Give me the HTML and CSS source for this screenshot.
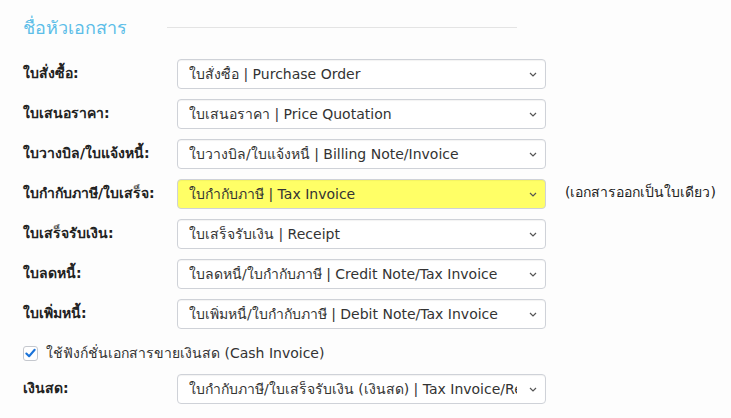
FILE: index.html
```html
<!DOCTYPE html>
<html lang="th">
<head>
  <meta charset="utf-8">
  <title>ชื่อหัวเอกสาร</title>
  <link rel="stylesheet" href="styles.css">
</head>
<body>
  <div class="section-head">
    <h3>ชื่อหัวเอกสาร</h3>
    <div class="rule"></div>
  </div>

  <div class="form">
    <div class="row">
      <label>ใบสั่งซื้อ:</label>
      <div class="select-wrap">
        <select><option>ใบสั่งซื้อ | Purchase Order</option></select>
        <svg class="chev" width="8" height="5" viewBox="0 0 8 5"><path d="M1 1l3 3 3-3" fill="none" stroke="#555" stroke-width="1.2"/></svg>
      </div>
    </div>
    <div class="row">
      <label>ใบเสนอราคา:</label>
      <div class="select-wrap">
        <select><option>ใบเสนอราคา | Price Quotation</option></select>
        <svg class="chev" width="8" height="5" viewBox="0 0 8 5"><path d="M1 1l3 3 3-3" fill="none" stroke="#555" stroke-width="1.2"/></svg>
      </div>
    </div>
    <div class="row">
      <label>ใบวางบิล/ใบแจ้งหนี้:</label>
      <div class="select-wrap">
        <select><option>ใบวางบิล/ใบแจ้งหนี้ | Billing Note/Invoice</option></select>
        <svg class="chev" width="8" height="5" viewBox="0 0 8 5"><path d="M1 1l3 3 3-3" fill="none" stroke="#555" stroke-width="1.2"/></svg>
      </div>
    </div>
    <div class="row">
      <label>ใบกำกับภาษี/ใบเสร็จ:</label>
      <div class="select-wrap">
        <select class="hl"><option>ใบกำกับภาษี | Tax Invoice</option></select>
        <svg class="chev" width="8" height="5" viewBox="0 0 8 5"><path d="M1 1l3 3 3-3" fill="none" stroke="#555" stroke-width="1.2"/></svg>
      </div>
      <span class="note">(เอกสารออกเป็นใบเดียว)</span>
    </div>
    <div class="row">
      <label>ใบเสร็จรับเงิน:</label>
      <div class="select-wrap">
        <select><option>ใบเสร็จรับเงิน | Receipt</option></select>
        <svg class="chev" width="8" height="5" viewBox="0 0 8 5"><path d="M1 1l3 3 3-3" fill="none" stroke="#555" stroke-width="1.2"/></svg>
      </div>
    </div>
    <div class="row">
      <label>ใบลดหนี้:</label>
      <div class="select-wrap">
        <select><option>ใบลดหนี้/ใบกำกับภาษี | Credit Note/Tax Invoice</option></select>
        <svg class="chev" width="8" height="5" viewBox="0 0 8 5"><path d="M1 1l3 3 3-3" fill="none" stroke="#555" stroke-width="1.2"/></svg>
      </div>
    </div>
    <div class="row">
      <label>ใบเพิ่มหนี้:</label>
      <div class="select-wrap">
        <select><option>ใบเพิ่มหนี้/ใบกำกับภาษี | Debit Note/Tax Invoice</option></select>
        <svg class="chev" width="8" height="5" viewBox="0 0 8 5"><path d="M1 1l3 3 3-3" fill="none" stroke="#555" stroke-width="1.2"/></svg>
      </div>
    </div>

    <div class="check-row">
      <span class="check">
        <svg width="14" height="14" viewBox="0 0 14 14"><path d="M2.5 7.5l3 3 6-7" fill="none" stroke="#1a73d9" stroke-width="2.2" stroke-linecap="round" stroke-linejoin="round"/></svg>
      </span>
      <span>ใช้ฟังก์ชั่นเอกสารขายเงินสด (Cash Invoice)</span>
    </div>

    <div class="row">
      <label>เงินสด:</label>
      <div class="select-wrap">
        <select><option>ใบกำกับภาษี/ใบเสร็จรับเงิน (เงินสด) | Tax Invoice/Receipt</option></select>
        <svg class="chev" width="8" height="5" viewBox="0 0 8 5"><path d="M1 1l3 3 3-3" fill="none" stroke="#555" stroke-width="1.2"/></svg>
      </div>
    </div>
  </div>
</body>
</html>
```

FILE: styles.css
```css
*{
  box-sizing: border-box;
}
body{
  margin: 0;
  padding: 0 23px;
  background: #fdfdfd;
  color: #333;
  font-family: Tahoma, "DejaVu Sans", "Noto Sans", sans-serif;
  font-size: 14px;
}
.section-head{
  display: flex;
  align-items: center;
  height: 52px;
  padding-top: 2px;
}
.section-head h3{
  margin: 0;
  width: 144px;
  font-size: 18px;
  font-weight: normal;
  color: #5cbde8;
}
.rule{
  width: 350px;
  height: 1px;
  background: #e4e4e4;
}
.form{
  padding-top: 7px;
}
.row{
  display: flex;
  align-items: center;
  height: 30px;
  margin-bottom: 10px;
}
.row label{
  flex: none;
  width: 154px;
  font-weight: bold;
  color: #222;
  margin-top: -3px;
}
.select-wrap{
  flex: none;
  position: relative;
  width: 369px;
  height: 30px;
}
.select-wrap select{
  appearance: none;
  -webkit-appearance: none;
  width: 100%;
  height: 100%;
  border: 1px solid #cfd2d8;
  border-radius: 4px;
  background: #fff;
  color: #333;
  font: inherit;
  padding: 0 28px 0 11px;
  box-shadow: inset 0 1px 1px rgba(0, 0, 0, 0.05);
}
.select-wrap select.hl{
  background: #ffff66;
}
.chev{
  position: absolute;
  right: 9px;
  top: 13px;
  pointer-events: none;
}
.note{
  margin-left: 19px;
  margin-top: -4px;
  color: #222;
  white-space: nowrap;
}
.check-row{
  display: flex;
  align-items: center;
  height: 30px;
  margin-top: -1px;
  margin-bottom: 6px;
}
.check{
  width: 15px;
  height: 15px;
  border: 1px solid #c5c8ce;
  border-radius: 3px;
  background: #fff;
  margin-right: 8px;
  display: flex;
  align-items: center;
  justify-content: center;
}
```
